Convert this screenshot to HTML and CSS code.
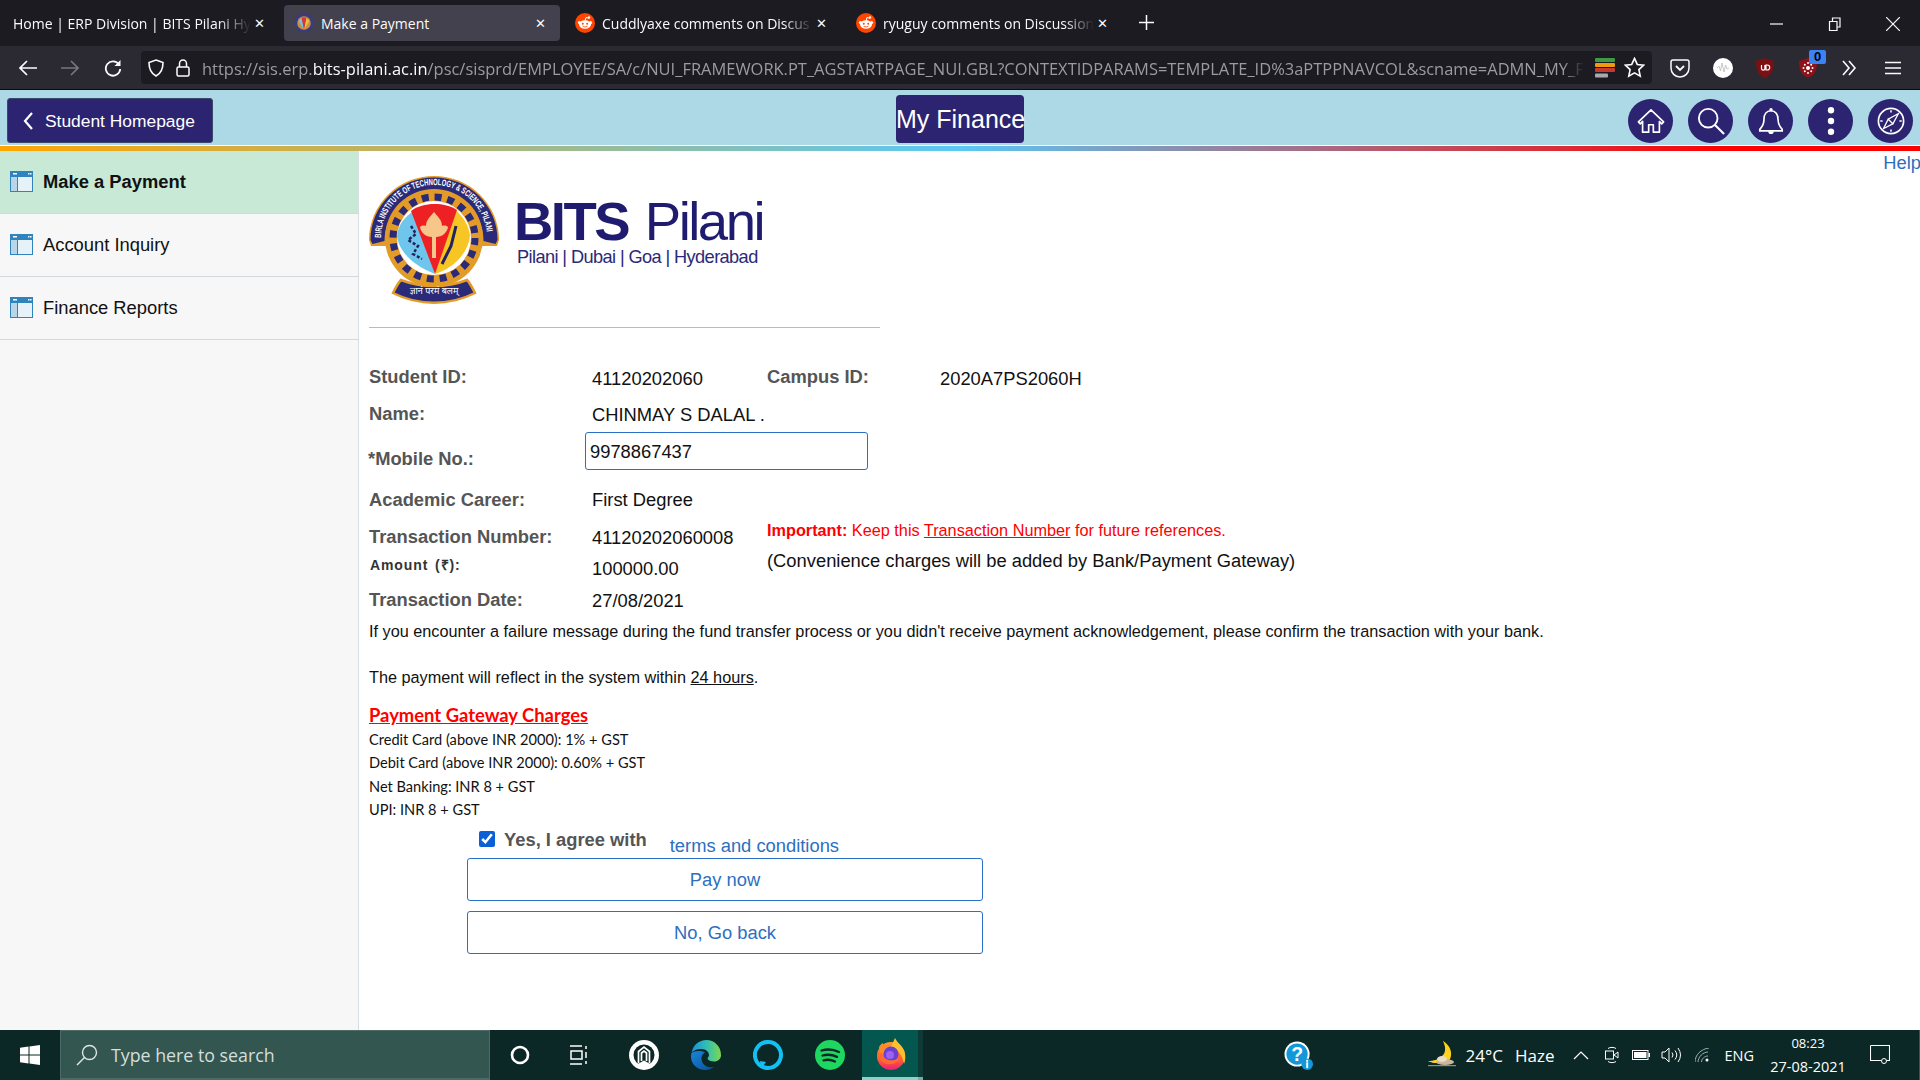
FILE: index.html
```html
<!DOCTYPE html>
<html lang="en">
<head>
  <meta charset="UTF-8">
  <title>Make a Payment</title>
  <link rel="stylesheet" href="styles.css">
</head>
<body>
  <svg class="defs" width="0" height="0">
    <defs>
      <linearGradient id="edge-top" x1="0" y1="0" x2="1" y2="0">
        <stop offset="0" stop-color="#1a8fdc"/>
        <stop offset=".55" stop-color="#35c1b0"/>
        <stop offset="1" stop-color="#7fd84a"/>
      </linearGradient>
      <linearGradient id="edge-low" x1="0" y1="0" x2="1" y2="1">
        <stop offset="0" stop-color="#1a86d8"/>
        <stop offset="1" stop-color="#0b4f9e"/>
      </linearGradient>
      <linearGradient id="fox-body" x1="0" y1="0" x2="0" y2="1">
        <stop offset="0" stop-color="#ff9a2b"/>
        <stop offset=".65" stop-color="#ff5a36"/>
        <stop offset="1" stop-color="#ea1f7a"/>
      </linearGradient>
    </defs>
    <symbol id="reddit" viewBox="0 0 20 20">
      <circle cx="10" cy="10" r="10" fill="#ff4500"/>
      <ellipse cx="10" cy="11.500" rx="6" ry="4.200" fill="#fff"/>
      <circle cx="4.400" cy="9.600" r="1.500" fill="#fff"/>
      <circle cx="15.600" cy="9.600" r="1.500" fill="#fff"/>
      <circle cx="14" cy="4.400" r="1.200" fill="#fff"/>
      <path d="M10 8l1-3.500 3 .7" fill="none" stroke="#fff"/>
      <circle cx="7.800" cy="10.800" r="1" fill="#ff4500"/>
      <circle cx="12.200" cy="10.800" r="1" fill="#ff4500"/>
      <path d="M7.600 13.300q2.400 1.400 4.800 0" fill="none" stroke="#ff4500" stroke-width=".8"/>
    </symbol>
    <symbol id="navpage" viewBox="0 0 23 21">
      <rect width="23" height="21" fill="#2f84bd"/>
      <rect x="1" y="5" width="21" height="15" fill="#e6f1f8"/>
      <rect x="1" y="5" width="6" height="15" fill="#b9d5e8"/>
      <rect x="3" y="2" width="4" height="1.500" fill="#fff"/>
      <rect x="18" y="2" width="1.500" height="1.500" fill="#fff"/>
      <rect x="20" y="2" width="1.500" height="1.500" fill="#fff"/>
      <rect x="1" y="5" width="21" height="1" fill="#2f84bd"/>
      <rect x="7" y="5" width="1" height="15" fill="#2f84bd"/>
    </symbol>
  </svg>

  <div class="tabstrip">
    <div class="tab">
      <span class="tab-title">Home | ERP Division | BITS Pilani Hy</span>
      <span class="tab-close">&#10005;</span>
    </div>
    <div class="tab tab-active">
      <svg class="tab-icon" viewBox="0 0 20 20">
        <circle cx="10" cy="10" r="9.500" fill="#3a3a80"/>
        <circle cx="10" cy="10" r="6.800" fill="#c98f3c"/>
        <path d="M10 17L4.500 8 8 4.500z" fill="#6fc3e8"/>
        <path d="M10 17l5.500-9L12 4.500z" fill="#e8c03a"/>
        <path d="M7.500 4.500h5L10 17z" fill="#d9363c"/>
      </svg>
      <span class="tab-title">Make a Payment</span>
      <span class="tab-close">&#10005;</span>
    </div>
    <div class="tab">
      <svg class="tab-icon"><use href="#reddit"/></svg>
      <span class="tab-title">Cuddlyaxe comments on Discus</span>
      <span class="tab-close">&#10005;</span>
    </div>
    <div class="tab">
      <svg class="tab-icon"><use href="#reddit"/></svg>
      <span class="tab-title">ryuguy comments on Discussion</span>
      <span class="tab-close">&#10005;</span>
    </div>
    <svg class="new-tab" viewBox="0 0 16 16"><path d="M8 0v16M0 8h16" stroke="#fbfbfe" stroke-width="1.600"/></svg>
    <div class="window-controls">
      <svg viewBox="0 0 14 14"><path d="M0 7h13" stroke="#fbfbfe" stroke-width="1.200"/></svg>
      <svg viewBox="0 0 14 14"><path d="M1.500 4.500h7.500v9H1.500zM4.500 4.500V1h7.500v9H9" fill="none" stroke="#fbfbfe" stroke-width="1.200"/></svg>
      <svg viewBox="0 0 14 14"><path d="M0 0l14 14M14 0L0 14" stroke="#fbfbfe" stroke-width="1.200"/></svg>
    </div>
  </div>

  <div class="toolbar">
    <svg class="tool tool-back" viewBox="0 0 18 16"><path d="M8 1L1 8l7 7M1 8h17" fill="none" stroke="#fbfbfe" stroke-width="1.700"/></svg>
    <svg class="tool tool-forward" viewBox="0 0 18 16"><path d="M10 1l7 7-7 7M17 8H0" fill="none" stroke="#77767c" stroke-width="1.700"/></svg>
    <svg class="tool tool-reload" viewBox="0 0 18 18"><path d="M15 5.500A7.200 7.200 0 1 0 16.200 10" fill="none" stroke="#fbfbfe" stroke-width="1.800"/><path d="M16.500 1v6h-6z" fill="#fbfbfe"/></svg>
    <div class="urlbar">
      <svg class="url-shield" viewBox="0 0 16 18"><path d="M8 1l7 2.500c0 7-2 11-7 13.500C3 14.500 1 10.500 1 3.500z" fill="none" stroke="#fbfbfe" stroke-width="1.600"/></svg>
      <svg class="url-lock" viewBox="0 0 14 18"><path d="M3.500 8V4.500a3.500 3.500 0 0 1 7 0V8" fill="none" stroke="#fbfbfe" stroke-width="1.500"/><rect x="1" y="8" width="12" height="9" rx="1.500" fill="none" stroke="#fbfbfe" stroke-width="1.500"/></svg>
      <div class="url-text">https://sis.erp.<b>bits-pilani.ac.in</b>/psc/sisprd/EMPLOYEE/SA/c/NUI_FRAMEWORK.PT_AGSTARTPAGE_NUI.GBL?CONTEXTIDPARAMS=TEMPLATE_ID%3aPTPPNAVCOL&amp;scname=ADMN_MY_F</div>
      <svg class="url-stack" viewBox="0 0 20 20">
        <rect width="20" height="4" rx="1" fill="#3d9a40"/>
        <rect y="5" width="20" height="4" rx="1" fill="#f09a0e"/>
        <rect y="10" width="20" height="4" rx="1" fill="#c43a32"/>
        <rect y="15.500" width="13" height="4" rx="1" fill="#aaa"/>
      </svg>
      <svg class="url-star" viewBox="0 0 22 22"><path d="M11 1.500l2.900 6.300 6.700.8-5 4.600 1.400 6.800-6-3.400-6 3.400 1.400-6.800-5-4.600 6.700-.8z" fill="none" stroke="#fbfbfe" stroke-width="1.700"/></svg>
    </div>
    <svg class="ext ext-pocket" viewBox="0 0 20 20"><path d="M3 2h14a2 2 0 0 1 2 2v6a9 9 0 0 1-18 0V4a2 2 0 0 1 2-2z" fill="none" stroke="#fbfbfe" stroke-width="1.500"/><path d="M6 8l4 4 4-4" fill="none" stroke="#fbfbfe" stroke-width="1.800"/></svg>
    <svg class="ext ext-dot" viewBox="0 0 20 20"><circle cx="10" cy="10" r="10" fill="#fff"/><path d="M4 10l2-2 1.500 5L9 5l2 9 1.500-7 1.500 4 2-1" fill="none" stroke="#bbb" stroke-width=".8"/></svg>
    <svg class="ext ext-ublock" viewBox="0 0 20 20"><path d="M10 0l9 3c0 9-2 14-9 17C3 17 1 12 1 3z" fill="#7a0f14"/><path d="M6.500 7v3.500a1.700 1.700 0 0 0 3.400 0V7M11 7v5h1.200a2.500 2.500 0 0 0 0-5z" fill="none" stroke="#fff" stroke-width="1.200"/></svg>
    <div class="ext-badged">
      <svg class="ext ext-red" viewBox="0 0 20 20"><path d="M10 0l9 3c0 9-2 14-9 17C3 17 1 12 1 3z" fill="#8d1219"/><circle cx="10" cy="10" r="2" fill="#fff"/><circle cx="10" cy="5" r="1" fill="#fff"/><circle cx="10" cy="15" r="1" fill="#fff"/><circle cx="5.500" cy="10" r="1" fill="#fff"/><circle cx="14.500" cy="10" r="1" fill="#fff"/><circle cx="6.800" cy="6.800" r="1" fill="#fff"/><circle cx="13.200" cy="6.800" r="1" fill="#fff"/><circle cx="6.800" cy="13.200" r="1" fill="#fff"/><circle cx="13.200" cy="13.200" r="1" fill="#fff"/></svg>
      <span class="badge">0</span>
    </div>
    <svg class="ext ext-more" viewBox="0 0 16 16"><path d="M2 1l6 7-6 7M8 1l6 7-6 7" fill="none" stroke="#fbfbfe" stroke-width="1.600"/></svg>
    <svg class="ext ext-menu" viewBox="0 0 16 14"><path d="M0 1.500h16M0 7h16M0 12.500h16" stroke="#fbfbfe" stroke-width="1.600"/></svg>
  </div>

  <header class="app-header">
    <a class="home-btn">
      <svg viewBox="0 0 10 18"><path d="M8.500 1L1.500 9l7 8" fill="none" stroke="#fff" stroke-width="2.200"/></svg>
      <span class="home-label">Student Homepage</span>
    </a>
    <div class="page-title">My Finance</div>
    <div class="header-icons">
      <span class="round-btn"><svg viewBox="0 0 30 30"><path d="M15 3L1.500 16l2 2L6 15.500V27h6.500v-8h5v8H24V15.500l2.500 2.500 2-2z" fill="none" stroke="#fff" stroke-width="1.800" stroke-linejoin="round"/></svg></span>
      <span class="round-btn"><svg viewBox="0 0 30 30"><circle cx="12" cy="12" r="10" fill="none" stroke="#fff" stroke-width="2"/><path d="M19 19l10 10" stroke="#fff" stroke-width="2.200"/></svg></span>
      <span class="round-btn"><svg viewBox="0 0 30 30"><path d="M15 4c-5 0-7.500 4-7.500 9 0 6-2 8-4.500 11v1.500h24V24c-2.500-3-4.500-5-4.500-11 0-5-2.500-9-7.500-9z" fill="none" stroke="#fff" stroke-width="1.800"/><circle cx="15" cy="3" r="1.800" fill="#fff"/><path d="M12 26a3 3 0 0 0 6 0" fill="#fff"/></svg></span>
      <span class="round-btn"><svg viewBox="0 0 30 30"><circle cx="15" cy="3.500" r="3.400" fill="#fff"/><circle cx="15" cy="15" r="3.400" fill="#fff"/><circle cx="15" cy="26.500" r="3.400" fill="#fff"/></svg></span>
      <span class="round-btn"><svg viewBox="0 0 30 30"><circle cx="15" cy="15" r="13.500" fill="none" stroke="#fff" stroke-width="1.800"/><path d="M23 7l-6 11-5-5zM7 23l5-10 5 5z" fill="none" stroke="#fff" stroke-width="1.400"/><path d="M15 3.500v2.500M15 24v2.500M3.500 15H6M24 15h2.500" stroke="#fff" stroke-width="1.600"/></svg></span>
    </div>
  </header>
  <div class="rainbow"></div>

  <main class="layout">
    <nav class="sidebar">
      <a class="nav-item nav-item-active"><svg><use href="#navpage"/></svg>Make a Payment</a>
      <a class="nav-item"><svg><use href="#navpage"/></svg>Account Inquiry</a>
      <a class="nav-item"><svg><use href="#navpage"/></svg>Finance Reports</a>
    </nav>

    <section class="content">
      <a class="help-link">Help</a>

      <div class="brand">
        <svg class="crest" viewBox="0 0 130 130">
          <defs>
            <path id="crest-arc" d="M12 64a53 53 0 0 1 106 0"/>
          </defs>
          <path d="M0 66a65 64 0 0 1 130 0l-2 6H2z" fill="#e39b27"/>
          <path d="M1.500 66a63.500 62.500 0 0 1 127 0l-2 4-12-3a49 49 0 0 0-99 0l-12 3z" fill="#2a2a78"/>
          <circle cx="65" cy="64" r="49" fill="#e39b27"/>
          <circle cx="65" cy="64" r="41" fill="none" stroke="#2a2a78" stroke-width="7" stroke-dasharray="7 5.900"/>
          <circle cx="65" cy="64" r="37" fill="#fff"/>
          <path d="M66 100C45 92 30 78 28 62c1-11 8-20 17-25z" fill="#6fc6ec"/>
          <path d="M66 100c17-5 33-20 35-38-1-11-8-21-15-26z" fill="#f7c624"/>
          <path d="M66 100L42 37c12-9 33-9 46-1z" fill="#ed2024"/>
          <path d="M65 38c4 5 8 8 8 14 3-1 5 0 6 1-1 6-6 10-12 10v21h-4V63c-6 0-11-4-12-10 1-1 3-2 6-1 0-6 4-9 8-14z" fill="#f6c68b"/>
          <path d="M42 52l5 8-8 6 10 6-5 8 9 5" fill="none" stroke="#23235f" stroke-width="2.500" stroke-dasharray="3 2"/>
          <path d="M87 52l-5 20-9 18" fill="none" stroke="#23235f" stroke-width="3"/>
          <path d="M24 119c4-8 6-11 8-13 20 8 46 8 66 0 2 2 4 5 8 13-26 13-56 13-82 0z" fill="#2a2a78" stroke="#e39b27" stroke-width="2.500"/>
          <text class="crest-ring" font-size="9"><textPath href="#crest-arc" textLength="160" lengthAdjust="spacingAndGlyphs">BIRLA INSTITUTE OF TECHNOLOGY &amp; SCIENCE, PILANI</textPath></text>
          <text class="crest-motto" x="65" y="120" text-anchor="middle">ज्ञानं परमं बलम्</text>
        </svg>
        <div class="wordmark">
          <div class="wordmark-name"><b>BITS</b> Pilani</div>
          <div class="wordmark-sites">Pilani | Dubai | Goa | Hyderabad</div>
        </div>
      </div>
      <hr class="rule">

      <div class="details">
        <div class="lbl lbl-top">Student ID:</div>
        <div class="val">41120202060</div>
        <div class="lbl lbl-top">Campus ID:</div>
        <div class="val">2020A7PS2060H</div>

        <div class="lbl">Name:</div>
        <div class="val val-wide">CHINMAY S DALAL .</div>

        <div class="lbl lbl-mobile">*Mobile No.:</div>
        <input class="mobile-input val-wide" value="9978867437">

        <div class="lbl lbl-drop">Academic Career:</div>
        <div class="val val-wide lbl-drop">First Degree</div>

        <div class="lbl">Transaction Number:</div>
        <div class="val">41120202060008</div>
        <div class="notes">
          <div class="note-important"><b>Important:</b> Keep this <u>Transaction Number</u> for future references.</div>
          <div class="note-charges">(Convenience charges will be added by Bank/Payment Gateway)</div>
        </div>

        <div class="lbl lbl-amount">Amount (&#8377;):</div>
        <div class="val">100000.00</div>

        <div class="lbl">Transaction Date:</div>
        <div class="val">27/08/2021</div>
      </div>

      <p class="info">If you encounter a failure message during the fund transfer process or you didn't receive payment acknowledgement, please confirm the transaction with your bank.</p>
      <p class="info info-gap">The payment will reflect in the system within <u>24 hours</u>.</p>

      <h3 class="charges-title">Payment Gateway Charges</h3>
      <ul class="charges">
        <li>Credit Card (above INR 2000): 1% + GST</li>
        <li>Debit Card (above INR 2000): 0.60% + GST</li>
        <li>Net Banking: INR 8 + GST</li>
        <li>UPI: INR 8 + GST</li>
      </ul>

      <div class="agree">
        <input type="checkbox" checked>
        <span class="agree-text">Yes, I agree with</span>
        <a class="terms">terms and conditions</a>
      </div>
      <button class="action-btn">Pay now</button>
      <button class="action-btn action-btn-second">No, Go back</button>
    </section>
  </main>

  <footer class="taskbar">
    <svg class="win-logo" viewBox="0 0 20 20"><path d="M0 2.800l8.500-1.200v8H0zM9.500 1.400L20 0v9.600H9.500zM0 10.500h8.500v8L0 17.300zM9.500 10.500H20V20L9.500 18.600z" fill="#fff"/></svg>
    <div class="task-search">
      <svg viewBox="0 0 22 22"><circle cx="13.500" cy="8.500" r="7" fill="none" stroke="#dfe6e5" stroke-width="1.400"/><path d="M8.500 13.500L1 21" stroke="#dfe6e5" stroke-width="1.400"/></svg>
      Type here to search
    </div>
    <svg class="task-icon task-cortana" viewBox="0 0 20 20"><circle cx="10" cy="10" r="8" fill="none" stroke="#fff" stroke-width="2.600"/></svg>
    <svg class="task-icon task-view" viewBox="0 0 20 20"><path d="M0 1h12M0 19h12M1 6h11v8H1zM16 1v3M16 7v6M16 16v3" fill="none" stroke="#fff" stroke-width="1.500"/></svg>
    <svg class="task-icon task-app" viewBox="0 0 30 30"><circle cx="15" cy="15" r="15" fill="#fff"/><circle cx="15" cy="15" r="10.500" fill="#0b2826"/><path d="M9.500 23V11.500L15 7l5.500 4.500V23M12.500 21V13l2.500-2 2.500 2v8" fill="none" stroke="#fff" stroke-width="1.700"/><path d="M7 25l8-4.500 8 4.500-8 4z" fill="#fff"/></svg>
    <svg class="task-icon task-edge" viewBox="0 0 30 30"><path d="M.5 13C2 5 8 0 15.500 0 23 0 30 6 30 15c0 4-3 6.500-7 6.500-3 0-6-1-6.500-3 0-1 1.500-1.500 1.500-3.500 0-3-3-6-7.500-6C6 9 2 10.500.5 13z" fill="url(#edge-top)"/><path d="M.5 13C-2 22 5 30 14 30c3.500 0 6.500-1 9-3-6 1.500-12.500-2-12.500-8.500 0-3 1.500-5 3.500-6C9 10 3 11 .5 13z" fill="url(#edge-low)"/></svg>
    <svg class="task-icon task-alexa" viewBox="0 0 30 30"><path d="M11.500 27.500A13 13 0 1 1 18 27.600a13 13 0 0 1-6.500-.1z" fill="none" stroke="#12c0f5" stroke-width="4"/><path d="M8 29l5-7-6-1z" fill="#12c0f5"/></svg>
    <svg class="task-icon task-spotify" viewBox="0 0 30 30"><circle cx="15" cy="15" r="15" fill="#1ed760"/><path d="M6.500 10.500c6-1.700 12-1.200 17.500 1.500M7.500 15.500c5-1.300 10-.8 14.500 1.400M8.500 20.300c4-1 8-.6 11.500 1.200" fill="none" stroke="#0b2826" stroke-width="2.300" stroke-linecap="round"/></svg>
    <div class="task-firefox">
      <svg viewBox="0 0 30 32"><circle cx="15" cy="18" r="14" fill="url(#fox-body)"/><path d="M19 0c1 3 4 5 7 9 4 5 4 12 2 17-1-6-4-14-13-17z" fill="#ffc02e"/><path d="M3 9c1-2 2-3 4-4 0 2 1 3 2 3 2-1 4-1 6-1L5 18z" fill="#ff8a2a"/><circle cx="15" cy="16" r="7.500" fill="#6b3fd4"/><circle cx="14" cy="17" r="4" fill="#9a62ee"/><path d="M2 18c2 6 8 9 14 8 5-1 8-4 9-8-3 4-8 5-12 4-4-1-7-3-7-8z" fill="#ff6a30"/></svg>
    </div>
    <div class="task-next"></div>

    <div class="tray">
      <svg class="tray-help" viewBox="0 0 30 30"><circle cx="13.500" cy="13.500" r="13" fill="#fff"/><circle cx="13.500" cy="13.500" r="11" fill="#1297d8"/><text x="13.500" y="21" text-anchor="middle" class="tray-help-q">?</text><circle cx="24" cy="24" r="6" fill="#1297d8"/><rect x="23" y="22" width="2" height="6" fill="#fff"/><rect x="23" y="19.500" width="2" height="2" fill="#fff"/></svg>
      <svg class="tray-moon" viewBox="0 0 28 28"><path d="M15 0c7 4 10 12 7 18-3 4-12 6-22 2 8 1 17-2 18-10 0-4-1-7-3-10z" fill="#ffd21f"/><path d="M15 0c3 6 3 12-1 15-3 3-8 5-14 5 6 3 14 2 18-2 4-5 2-14-3-18z" fill="#ffd21f"/><ellipse cx="17" cy="21" rx="9" ry="3" fill="#cdb79a"/><ellipse cx="14" cy="18" rx="5" ry="3" fill="#e9dcc8"/><rect y="24" width="28" height="1.200" fill="#8b8f86"/></svg>
      <span class="tray-temp">24°C</span>
      <span class="tray-haze">Haze</span>
      <svg class="tray-caret" viewBox="0 0 16 10"><path d="M1 9l7-7 7 7" fill="none" stroke="#fff" stroke-width="1.200"/></svg>
      <svg class="tray-cam" viewBox="0 0 14 18"><path d="M3 2.500C5 1 9 1 11 2.500M3 15.500C5 17 9 17 11 15.500" fill="none" stroke="#fff"/><rect x=".5" y="5" width="8" height="8" fill="none" stroke="#fff"/><path d="M9 9l4-3v6z" fill="none" stroke="#fff"/></svg>
      <svg class="tray-battery" viewBox="0 0 18 10"><rect x=".5" y=".5" width="15.500" height="9" fill="none" stroke="#fff"/><rect x="2" y="2" width="12.500" height="6" fill="#fff"/><rect x="16.500" y="3" width="1.500" height="4" fill="#fff"/></svg>
      <svg class="tray-volume" viewBox="0 0 20 16"><path d="M1 5h3l4-4v14l-4-4H1z" fill="none" stroke="#fff"/><path d="M11 5.500q2 2.500 0 5M14 3.500q3.500 4.500 0 9M17 1q5 7 0 14" fill="none" stroke="#fff"/></svg>
      <svg class="tray-wifi" viewBox="0 0 14 14"><path d="M0 14C0 7 6 1 14 0M3 14C3 9 8 4 13 4M6.500 14c0-3 3-6 6.500-6" fill="none" stroke="#9fb0ad"/><circle cx="12" cy="12" r="1.500" fill="#fff"/></svg>
      <span class="tray-lang">ENG</span>
      <div class="tray-clock"><span>08:23</span><span class="tray-date">27-08-2021</span></div>
      <svg class="tray-notify" viewBox="0 0 20 20"><path d="M.5.500h19v15h-3M11 15.500H.5V.500" fill="none" stroke="#fff" stroke-width="1.100"/><circle cx="14" cy="16" r="2.500" fill="none" stroke="#fff"/></svg>
    </div>
  </footer>
</body>
</html>
```

FILE: styles.css
```css
* {
  box-sizing: border-box;
}
html, body {
  margin: 0;
  height: 1080px;
  overflow: hidden;
}
body {
  display: flex;
  flex-direction: column;
  font-family: "Liberation Sans", Arial, sans-serif;
  font-size: 18.350px;
  color: #111;
  background: #fff;
}
.defs {
  position: absolute;
}

/* browser tabs */
.tabstrip {
  height: 46px;
  padding: 5px 0 5px 3px;
  display: flex;
  align-items: stretch;
  gap: 5px;
  background: #1c1b22;
  font-family: "Open Sans", sans-serif;
  font-size: 14px;
  color: #fbfbfe;
}
.tab {
  width: 276px;
  padding: 0 14px 0 10px;
  display: flex;
  align-items: center;
  border-radius: 4px;
}
.tab-active {
  background: #42414d;
}
.tab-icon {
  width: 20px;
  height: 20px;
  margin-right: 7px;
  flex: none;
}
.tab-title {
  flex: 1;
  white-space: nowrap;
  -webkit-mask-image: linear-gradient(90deg, #000 86%, transparent);
  mask-image: linear-gradient(90deg, #000 86%, transparent);
}
.tab-active .tab-title {
  -webkit-mask-image: none;
  mask-image: none;
}
.tab-close {
  width: 12px;
  margin-left: 2px;
  font-size: 13px;
  text-align: center;
  flex: none;
}
.new-tab {
  width: 15px;
  height: 15px;
  margin: 10px 0 0 12px;
}
.window-controls {
  margin-left: auto;
  display: flex;
  gap: 44px;
  padding: 12px 20px 0 0;
}
.window-controls svg {
  width: 14px;
  height: 14px;
}

/* browser toolbar */
.toolbar {
  height: 44px;
  display: flex;
  align-items: center;
  background: #2b2a33;
  border-bottom: 1px solid #0c0c0d;
}
.tool {
  width: 18px;
  height: 16px;
  flex: none;
}
.tool-back {
  margin-left: 19px;
}
.tool-forward {
  margin-left: 24px;
}
.tool-reload {
  margin-left: 25px;
  height: 18px;
}
.urlbar {
  width: 1511px;
  height: 33px;
  margin-left: 19px;
  padding: 0 8px 0 0;
  display: flex;
  align-items: center;
  background: #1c1b22;
  border-radius: 4px;
  flex: none;
}
.url-shield {
  width: 16px;
  height: 18px;
  margin-left: 7px;
  flex: none;
}
.url-lock {
  width: 14px;
  height: 18px;
  margin-left: 12px;
  flex: none;
}
.url-text {
  width: 1382px;
  margin: 1px 0 0 12px;
  font-family: "Open Sans", sans-serif;
  font-size: 16.470px;
  color: #9c9ba1;
  white-space: nowrap;
  flex: none;
  -webkit-mask-image: linear-gradient(90deg, #000 98.500%, transparent);
  mask-image: linear-gradient(90deg, #000 98.500%, transparent);
}
.url-text b {
  font-weight: 400;
  color: #fbfbfe;
}
.url-stack {
  width: 20px;
  height: 20px;
  margin-left: 11px;
  flex: none;
}
.url-star {
  width: 21px;
  height: 21px;
  margin-left: 9px;
  flex: none;
}
.ext {
  width: 20px;
  height: 20px;
  flex: none;
}
.ext-pocket {
  margin-left: 18px;
}
.ext-dot {
  margin-left: 23px;
}
.ext-ublock {
  margin-left: 22px;
}
.ext-badged {
  position: relative;
  margin-left: 23px;
  height: 20px;
}
.badge {
  position: absolute;
  top: -8px;
  left: 11px;
  width: 17px;
  height: 14px;
  border-radius: 2px;
  background: #3b82f6;
  color: #000;
  font-size: 13px;
  font-weight: 700;
  line-height: 14px;
  text-align: center;
}
.ext-more {
  width: 16px;
  height: 16px;
  margin-left: 23px;
}
.ext-menu {
  width: 16px;
  height: 14px;
  margin-left: 28px;
}

/* page header */
.app-header {
  height: 55px;
  display: flex;
  align-items: flex-start;
  background: #add8e6;
}
.home-btn {
  width: 206px;
  height: 45px;
  margin: 8px 0 0 7px;
  padding-left: 15px;
  display: flex;
  align-items: center;
  gap: 11px;
  background: #2c2470;
  border: 1px solid #3b4a6b;
  border-radius: 3px;
  color: #fff;
  font-size: 17.400px;
  white-space: nowrap;
}
.home-btn svg {
  width: 11px;
  height: 18px;
  flex: none;
}
.home-label {
  padding-top: 2px;
}
.page-title {
  width: 128px;
  height: 48px;
  margin: 5px 0 0 683px;
  background: #2c2470;
  border-radius: 4px;
  color: #fff;
  font-size: 25px;
  line-height: 48px;
  text-align: center;
  white-space: nowrap;
}
.header-icons {
  margin: 9px 7px 0 auto;
  display: flex;
  gap: 15px;
}
.round-btn {
  width: 45px;
  height: 44px;
  display: flex;
  align-items: center;
  justify-content: center;
  border-radius: 50%;
  background: #2c2470;
}
.round-btn svg {
  width: 28px;
  height: 28px;
}
.rainbow {
  height: 6px;
  border-top: 1px solid #fff;
  background: linear-gradient(90deg, #ffa500 0%, #5bc8f5 50%, #ff0000 90%, #ff0000 100%);
}

/* main layout */
.layout {
  flex: 1;
  display: flex;
  min-height: 0;
}
.sidebar {
  width: 359px;
  background: #f7f7f7;
  border-right: 1px solid #d8dde2;
  flex: none;
}
.nav-item {
  height: 63px;
  padding-left: 10px;
  display: flex;
  align-items: center;
  gap: 10px;
  border-bottom: 1px solid #d3d8dd;
  color: #111;
}
.nav-item svg {
  width: 23px;
  height: 21px;
  margin-top: -1px;
}
.nav-item-active {
  background: #c8e9d6;
  font-weight: 700;
}
.content {
  flex: 1;
  position: relative;
  padding: 23px 0 0 10px;
}
.help-link {
  position: absolute;
  top: 1px;
  right: -1px;
  color: #2d6fbf;
}

/* logo */
.brand {
  height: 130px;
  display: flex;
}
.crest {
  width: 130px;
  height: 130px;
  flex: none;
}
.crest-ring {
  font-family: "Liberation Sans", sans-serif;
  font-weight: 700;
  fill: #fff;
}
.crest-motto {
  font-family: "Noto Sans", "DejaVu Sans", sans-serif;
  font-size: 9px;
  fill: #fff;
}
.tray-help-q {
  font-family: "Liberation Sans", sans-serif;
  font-size: 20px;
  font-weight: 700;
  fill: #fff;
}
.wordmark {
  margin: 24px 0 0 15px;
  color: #1f1c70;
}
.wordmark-name {
  font-size: 54.500px;
  line-height: 48px;
  letter-spacing: -2.500px;
  word-spacing: 4px;
  white-space: nowrap;
}
.wordmark-sites {
  margin-left: 3px;
  font-size: 18.200px;
  line-height: 22px;
  letter-spacing: -.6px;
  color: #2b2a78;
  white-space: nowrap;
}
.rule {
  width: 511px;
  height: 1px;
  margin: 23px 0 0;
  border: 0;
  background: #bbb;
}

/* student details */
.details {
  margin-top: 32px;
  display: grid;
  grid-template-columns: 223px 175px 173px 1fr;
  grid-template-rows: 36px 36px 38px 48px 38px 24px 40px;
  align-items: center;
}
.lbl {
  font-weight: 700;
  color: #555;
  white-space: nowrap;
}
.lbl-top {
  padding-bottom: 2px;
}
.val {
  padding-top: 2px;
  white-space: nowrap;
}
.val-wide {
  grid-column: 2 / span 3;
}
.lbl-mobile {
  padding-top: 16px;
  margin-left: -1px;
}
.lbl-drop {
  padding-top: 12px;
}
.lbl-amount {
  padding-bottom: 8px;
  margin-left: 1px;
  font-size: 14px;
  letter-spacing: .9px;
  word-spacing: 2px;
  color: #333;
}
.mobile-input {
  width: 283px;
  height: 38px;
  margin-left: -7px;
  padding: 1px 4px 0;
  justify-self: start;
  border: 1px solid #2a70c8;
  border-radius: 3px;
  font: inherit;
  color: #111;
}
.notes {
  grid-column: 3 / span 2;
  grid-row: 5 / span 2;
  align-self: start;
}
.note-important {
  height: 24px;
  font-size: 16.250px;
  line-height: 24px;
  color: #f00;
  white-space: nowrap;
}
.note-charges {
  height: 24px;
  margin-top: 7px;
  line-height: 24px;
  white-space: nowrap;
}
.info {
  margin: 0;
  font-size: 16.250px;
  line-height: 22px;
  white-space: nowrap;
}
.info-gap {
  margin-top: 24px;
}
.charges-title {
  margin: 16px 0 0;
  font-family: Lato, sans-serif;
  font-size: 18.400px;
  line-height: 22px;
  color: #f00;
  text-decoration: underline;
}
.charges {
  margin: 2px 0 0;
  padding: 0;
  list-style: none;
  font-family: Lato, sans-serif;
  font-size: 14.600px;
  line-height: 23.400px;
}
.agree {
  height: 36px;
  padding-left: 110px;
  display: flex;
  align-items: center;
}
.agree input {
  width: 16px;
  height: 16px;
  margin: 0 0 1px;
  accent-color: #0b5fd7;
}
.agree-text {
  margin-left: 9px;
  font-weight: 700;
  color: #555;
}
.terms {
  margin: 12px 0 0 23px;
  color: #2d6fbf;
}
.action-btn {
  display: block;
  width: 516px;
  height: 43px;
  margin-left: 98px;
  padding-top: 2px;
  background: #fff;
  border: 1px solid #2a70c8;
  border-radius: 3px;
  color: #2d6fbf;
  font: inherit;
}
.action-btn-second {
  margin-top: 10px;
}

/* windows taskbar */
.taskbar {
  height: 50px;
  display: flex;
  align-items: center;
  background: #0b2826;
  color: #fff;
}
.win-logo {
  width: 20px;
  height: 20px;
  margin-left: 20px;
  flex: none;
}
.task-search {
  width: 430px;
  height: 50px;
  margin-left: 20px;
  padding-left: 15px;
  display: flex;
  align-items: center;
  gap: 13px;
  background: #345651;
  border: 1px solid #4c6b67;
  border-bottom-width: 2px;
  font-family: "Open Sans", sans-serif;
  font-size: 17.800px;
  color: #d5dedc;
  flex: none;
}
.task-search svg {
  width: 22px;
  height: 22px;
}
.task-icon {
  flex: none;
}
.task-cortana {
  width: 20px;
  height: 20px;
  margin-left: 20px;
}
.task-view {
  width: 20px;
  height: 20px;
  margin-left: 40px;
}
.task-app {
  width: 30px;
  height: 30px;
  margin-left: 39px;
}
.task-edge {
  width: 30px;
  height: 30px;
  margin-left: 32px;
}
.task-alexa {
  width: 30px;
  height: 30px;
  margin-left: 32px;
}
.task-spotify {
  width: 30px;
  height: 30px;
  margin-left: 32px;
}
.task-firefox {
  width: 56px;
  height: 50px;
  margin-left: 17px;
  display: flex;
  align-items: center;
  justify-content: center;
  background: #04574f;
  border-bottom: 3px solid #8fd0c8;
  flex: none;
}
.task-firefox svg {
  width: 30px;
  height: 32px;
  margin-left: 2px;
}
.task-next {
  width: 5px;
  height: 50px;
  background: #0e3a36;
  border-bottom: 3px solid #6fb0a8;
  flex: none;
}
.tray {
  margin-left: auto;
  padding-right: 6px;
  height: 50px;
  display: flex;
  align-items: center;
  font-family: "Open Sans", sans-serif;
  border-right: 1px solid #3c5452;
}
.tray svg {
  flex: none;
}
.tray-help {
  width: 29px;
  height: 29px;
}
.tray-moon {
  width: 28px;
  height: 28px;
  margin-left: 115px;
}
.tray-temp {
  margin-left: 10px;
  font-size: 17px;
}
.tray-haze {
  margin-left: 12px;
  font-size: 17px;
}
.tray-caret {
  width: 16px;
  height: 10px;
  margin-left: 19px;
}
.tray-cam {
  width: 14px;
  height: 18px;
  margin-left: 16px;
}
.tray-battery {
  width: 18px;
  height: 10px;
  margin-left: 13px;
}
.tray-volume {
  width: 20px;
  height: 16px;
  margin-left: 11px;
}
.tray-wifi {
  width: 14px;
  height: 14px;
  margin-left: 14px;
}
.tray-lang {
  margin-left: 15px;
  font-size: 14.500px;
}
.tray-clock {
  width: 80px;
  margin-left: 14px;
  display: flex;
  flex-direction: column;
  align-items: center;
  gap: 6px;
  font-size: 13px;
  line-height: 18px;
}
.tray-date {
  font-size: 14.500px;
}
.tray-notify {
  width: 20px;
  height: 20px;
  margin-left: 22px;
  margin-right: 23px;
}
```
